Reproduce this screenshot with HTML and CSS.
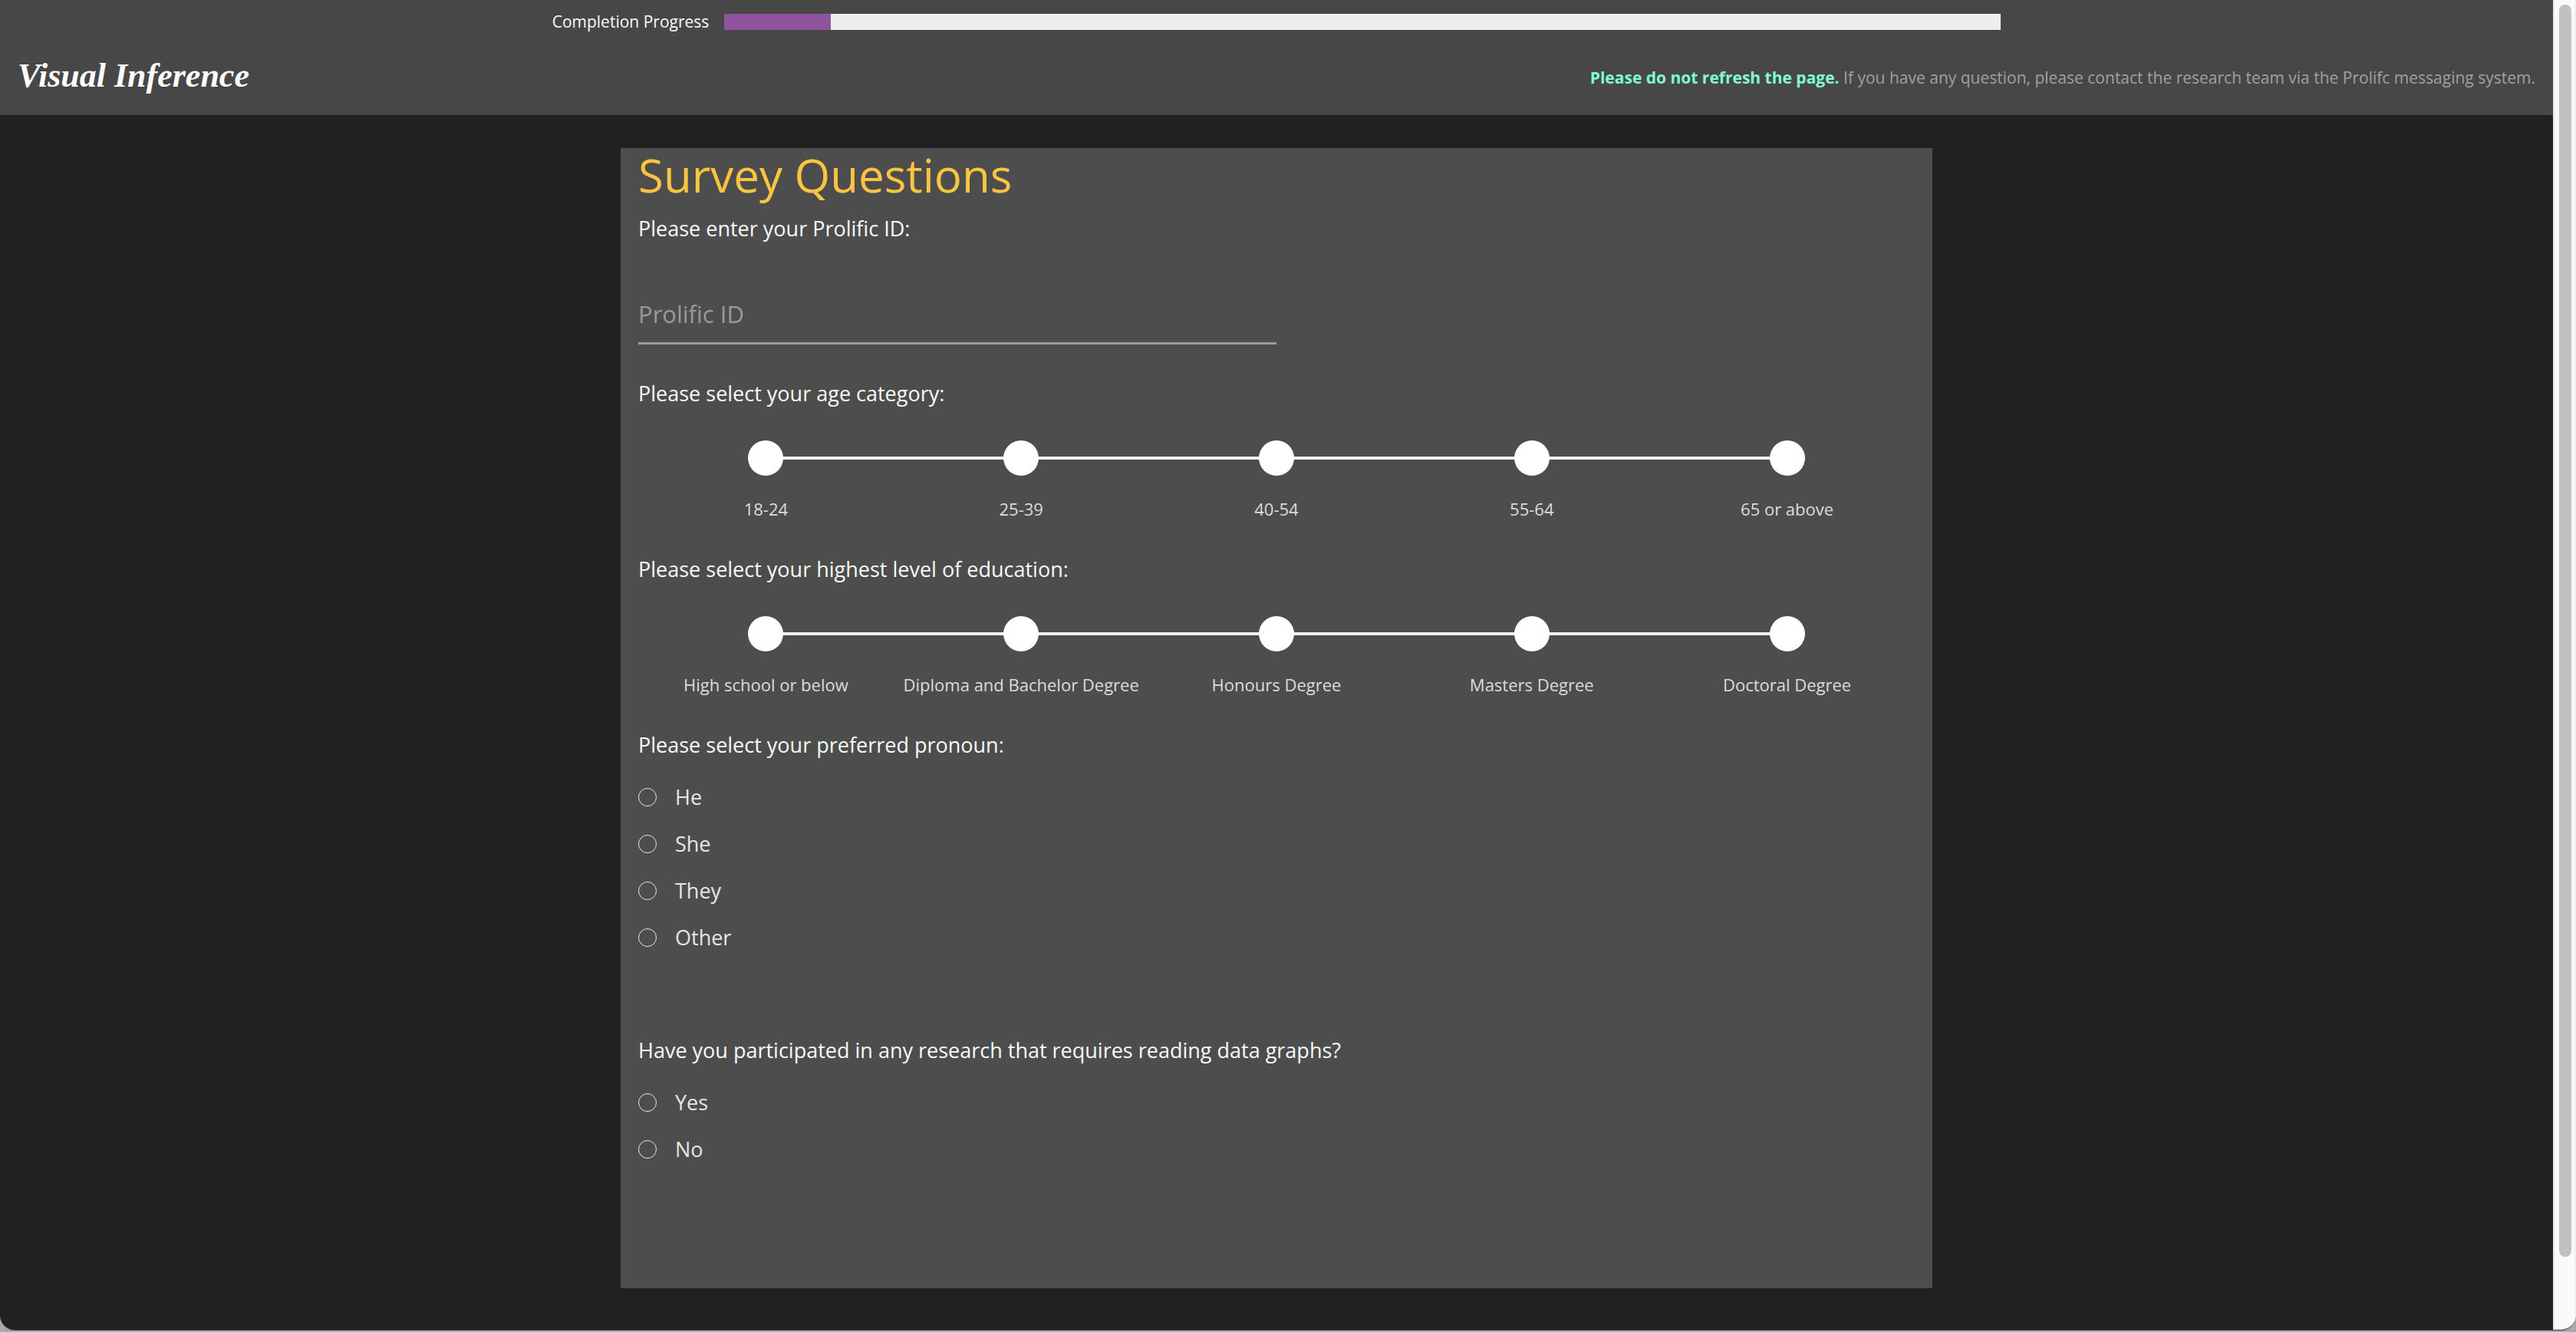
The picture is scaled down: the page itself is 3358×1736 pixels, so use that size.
FILE: index.html
```html
<!DOCTYPE html>
<html lang="en">
<head>
<meta charset="utf-8">
<title>Visual Inference</title>
<link rel="stylesheet" href="styles.css">
</head>
<body>
<div class="window">
  <div class="page">
    <header class="header">
      <div class="progress">
        <span class="progress-label" id="progress-label">Completion Progress</span>
        <div class="progress-track" role="progressbar" aria-labelledby="progress-label" aria-valuenow="1" aria-valuemin="0" aria-valuemax="12">
          <div class="progress-fill" style="width: 8.35%"></div>
        </div>
      </div>
      <div class="header-row">
        <div class="logo">Visual Inference</div>
        <p class="notice"><strong>Please do not refresh the page.</strong> If you have any question, please contact the research team via the Prolifc messaging system.</p>
      </div>
    </header>
    <main class="main">
      <form class="survey">
        <h1 class="title">Survey Questions</h1>
        <label class="question" for="prolific-id">Please enter your Prolific ID:</label>
        <input class="text-field" id="prolific-id" type="text" placeholder="Prolific ID">

        <fieldset class="group">
          <legend class="question">Please select your age category:</legend>
          <div class="scale">
            <label class="step"><input class="dot" type="radio" name="age"><span>18-24</span></label>
            <label class="step"><input class="dot" type="radio" name="age"><span>25-39</span></label>
            <label class="step"><input class="dot" type="radio" name="age"><span>40-54</span></label>
            <label class="step"><input class="dot" type="radio" name="age"><span>55-64</span></label>
            <label class="step"><input class="dot" type="radio" name="age"><span>65 or above</span></label>
          </div>
        </fieldset>

        <fieldset class="group">
          <legend class="question">Please select your highest level of education:</legend>
          <div class="scale">
            <label class="step"><input class="dot" type="radio" name="education"><span>High school or below</span></label>
            <label class="step"><input class="dot" type="radio" name="education"><span>Diploma and Bachelor Degree</span></label>
            <label class="step"><input class="dot" type="radio" name="education"><span>Honours Degree</span></label>
            <label class="step"><input class="dot" type="radio" name="education"><span>Masters Degree</span></label>
            <label class="step"><input class="dot" type="radio" name="education"><span>Doctoral Degree</span></label>
          </div>
        </fieldset>

        <fieldset class="group">
          <legend class="question">Please select your preferred pronoun:</legend>
          <div class="options">
            <label class="option"><input class="radio" type="radio" name="pronoun">He</label>
            <label class="option"><input class="radio" type="radio" name="pronoun">She</label>
            <label class="option"><input class="radio" type="radio" name="pronoun">They</label>
            <label class="option"><input class="radio" type="radio" name="pronoun">Other</label>
          </div>
        </fieldset>

        <fieldset class="group group-spaced">
          <legend class="question">Have you participated in any research that requires reading data graphs?</legend>
          <div class="options">
            <label class="option"><input class="radio" type="radio" name="participated">Yes</label>
            <label class="option"><input class="radio" type="radio" name="participated">No</label>
          </div>
        </fieldset>
      </form>
    </main>
  </div>
  <div class="scrollbar" aria-hidden="true"><div class="thumb"></div></div>
</div>
</body>
</html>
```
FILE: styles.css
```css
* {
  box-sizing: border-box;
}

body {
  margin: 0;
  padding-bottom: 2px;
  background: #a9a7a7;
  color: #fafafa;
  font: 27px/38px "Open Sans", sans-serif;
}

.window {
  display: flex;
  min-height: calc(100vh - 2px);
  border-bottom: 1px solid #3c3c3c;
  border-radius: 0 0 20px 20px;
  background: #212121;
  overflow: hidden;
}

.page {
  flex: 1;
  min-width: 0;
}

/* Header */

.header {
  padding: 13px 23px 19px;
  background: #474747;
}

.progress {
  display: flex;
  align-items: center;
  justify-content: center;
  gap: 20px;
  font-size: 21px;
  line-height: 30px;
}

.progress-track {
  width: 50%;
  min-width: calc(50% + 23px);
  height: 21px;
  background: #eee;
}

.progress-fill {
  height: 100%;
  background: #90549f;
}

.header-row {
  display: flex;
  align-items: center;
  justify-content: space-between;
  padding-top: 28px;
}

.logo {
  padding-bottom: 4px;
  color: #fff;
  font: italic bold 44px/56px "Liberation Serif", cursive;
}

.notice {
  margin: 0;
  color: #a0a0a0;
  font-size: 21px;
  line-height: 30px;
}

.notice strong {
  color: #7fffd4;
}

/* Survey panel */

.main {
  padding: 43px 0 53px;
}

.survey {
  box-sizing: content-box;
  width: 50%;
  margin: 0 auto;
  padding: 0 23px 151px;
  background: #4d4d4d;
}

.title {
  margin: 0 0 16px;
  color: #f9c440;
  font-size: 60px;
  font-weight: 400;
  line-height: 70px;
}

.question {
  display: block;
  padding: 0;
}

.text-field {
  display: block;
  width: 50%;
  height: 77px;
  margin-top: 55px;
  padding: 0;
  border: 0;
  border-bottom: 3px solid #9a9a9a;
  background: none;
  color: #fafafa;
  font: 31px "Open Sans", sans-serif;
}

.text-field::placeholder {
  color: #999;
  opacity: 1;
}

.group {
  min-width: 0;
  margin: 45px 0 0;
  padding: 0;
  border: 0;
}

.group-spaced {
  margin-top: 98px;
}

/* Scale of connected dots */

.scale {
  display: grid;
  grid-template-columns: repeat(5, 1fr);
  padding-top: 42px;
}

.step {
  position: relative;
  display: flex;
  flex-direction: column;
  align-items: center;
  gap: 28px;
  color: #dcdcdc;
  font-size: 22px;
  line-height: 30px;
  text-align: center;
}

.step + .step::before {
  content: "";
  position: absolute;
  top: 21px;
  right: 50%;
  width: 100%;
  height: 4px;
  background: #f0f0f0;
}

.dot {
  position: relative;
  z-index: 1;
  width: 46px;
  height: 46px;
  margin: 0;
  border-radius: 50%;
  background: #fff;
  appearance: none;
}

/* Radio lists */

.options {
  padding-top: 18px;
}

.option {
  display: flex;
  align-items: center;
  gap: 24px;
  height: 61px;
  color: #e6e6e6;
}

.radio {
  width: 24px;
  height: 24px;
  margin: 0;
  border: 1px solid #e6e6e6;
  border-radius: 50%;
  appearance: none;
}

.dot:checked,
.radio:checked {
  background: #90549f;
}

/* Scrollbar */

.scrollbar {
  width: 30px;
  padding: 6px 4px 0 6px;
  border-left: 2px solid #e8e8e8;
  border-right: 2px solid #f0f0f0;
  background: #fafafa;
}

.thumb {
  width: 16px;
  height: 94.5%;
  border-radius: 8px;
  background: #c1c1c1;
}
```
